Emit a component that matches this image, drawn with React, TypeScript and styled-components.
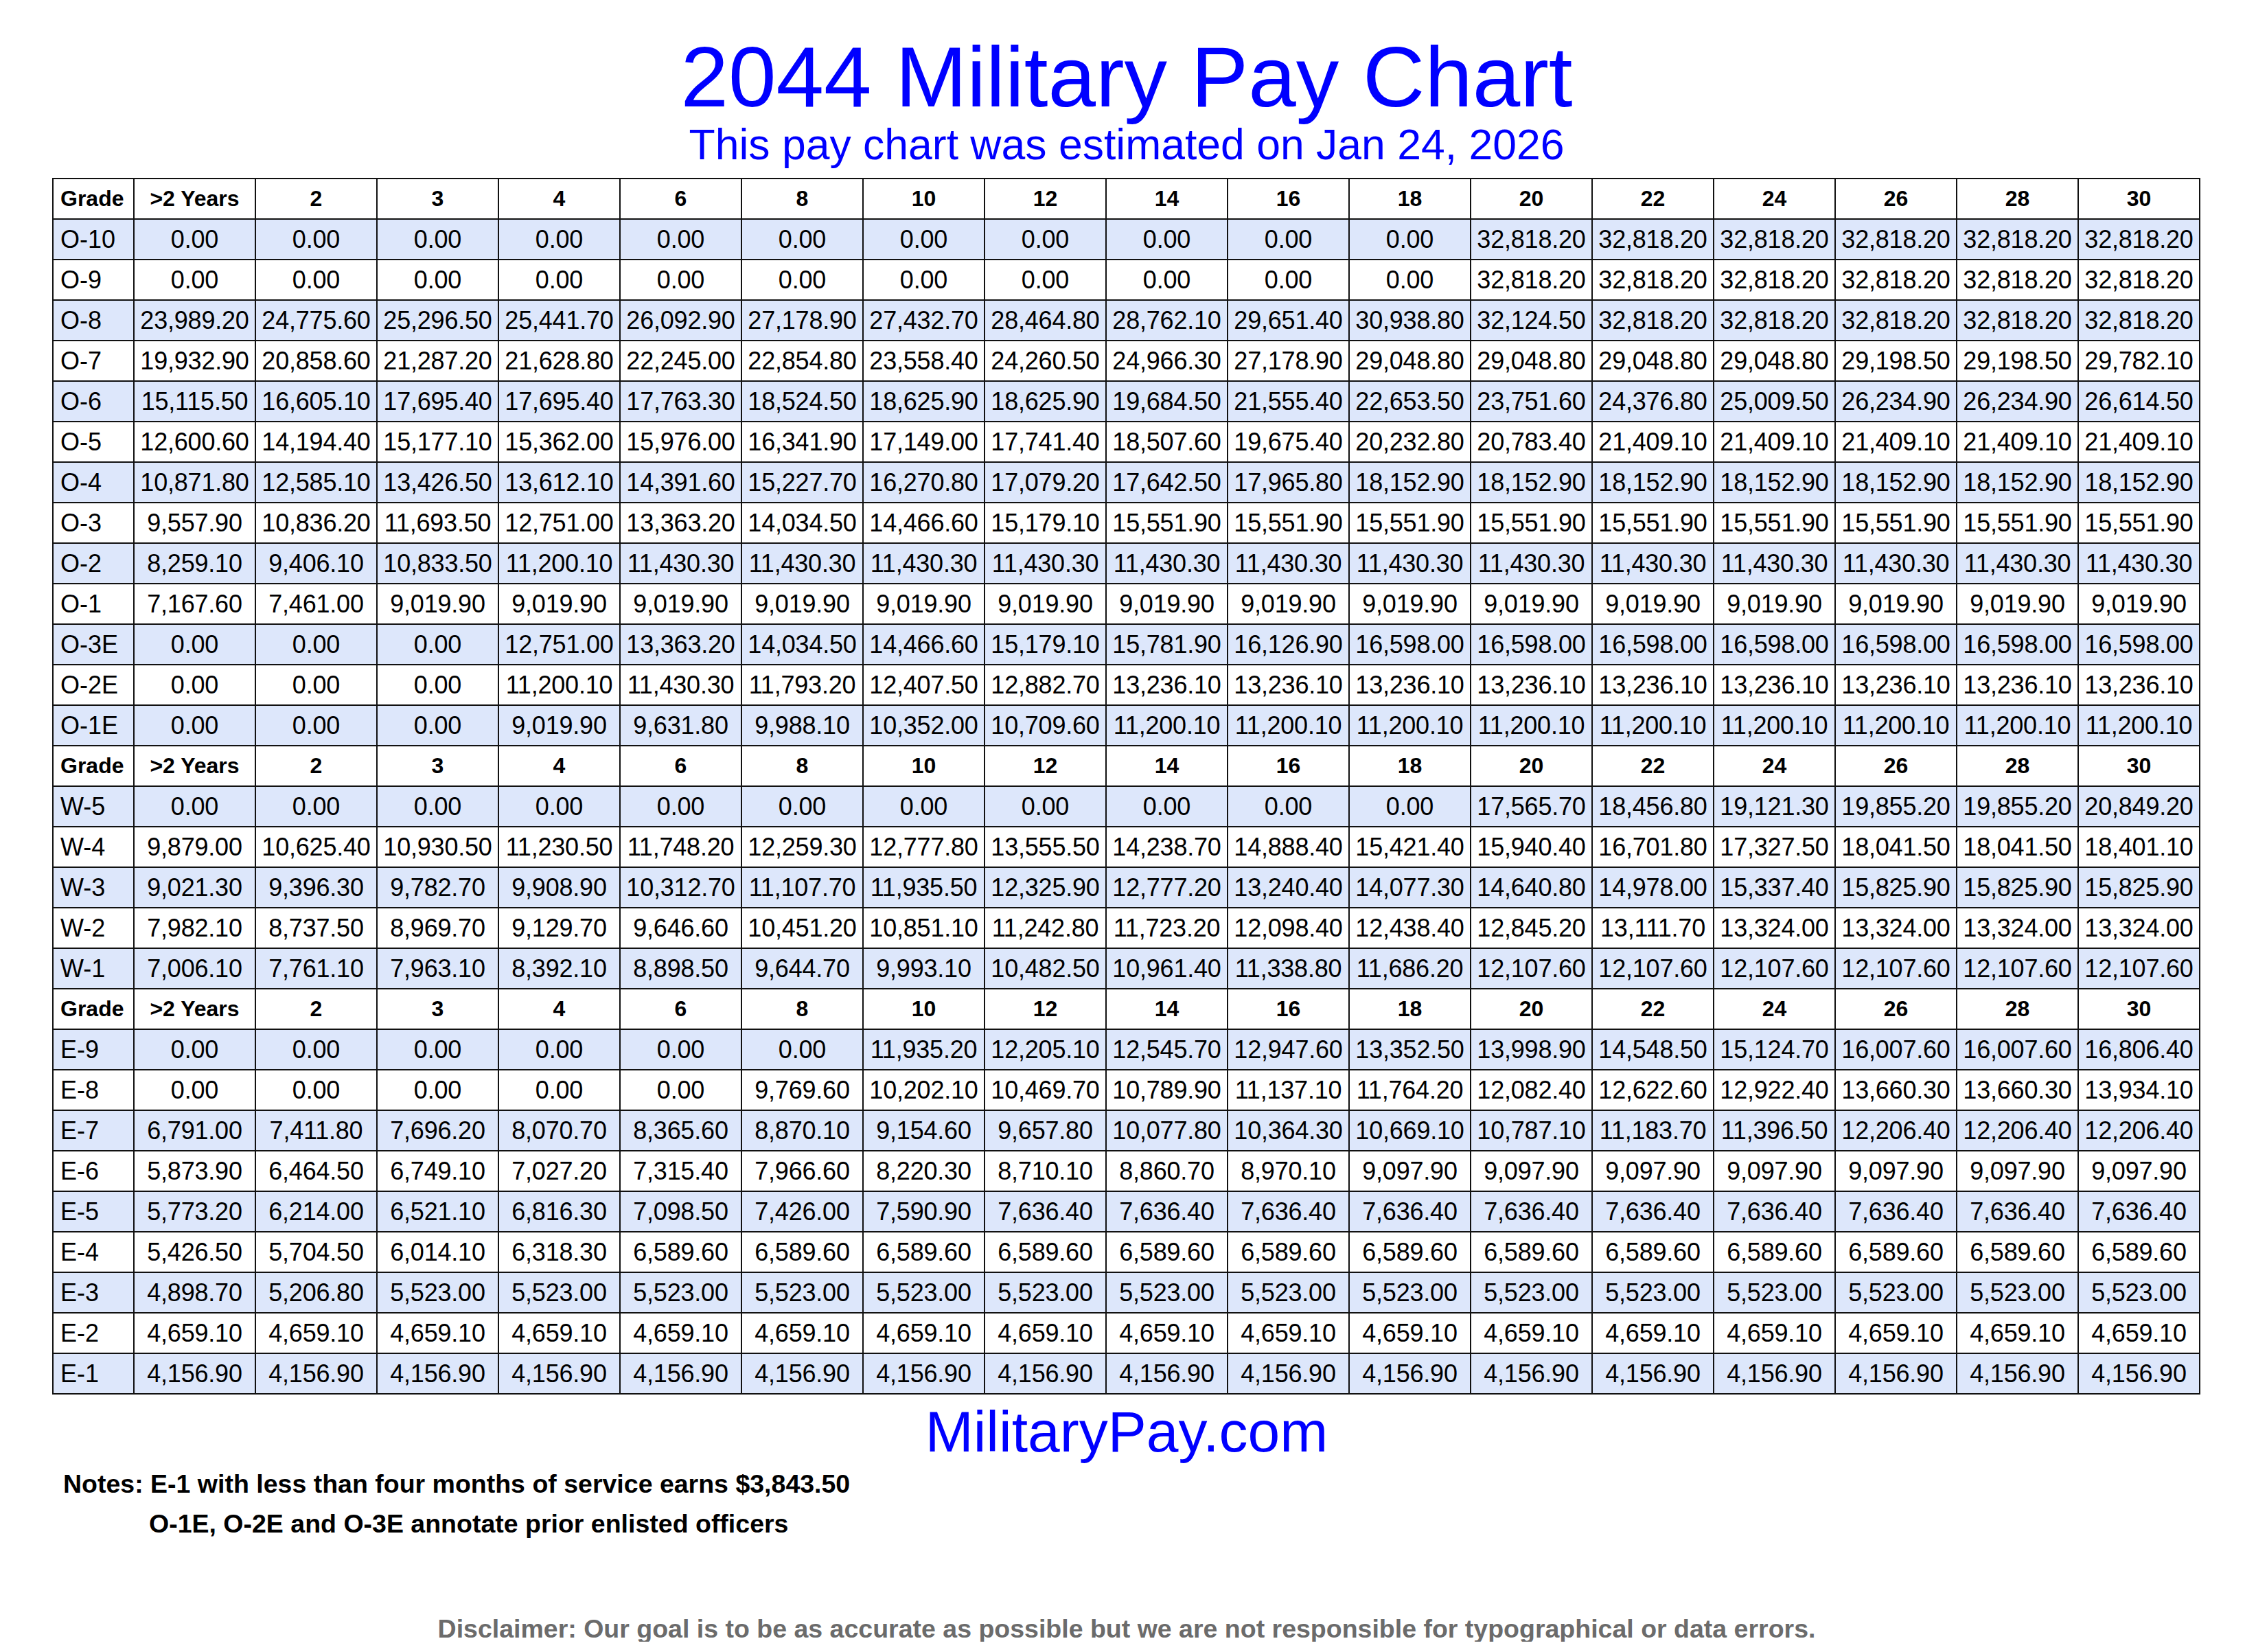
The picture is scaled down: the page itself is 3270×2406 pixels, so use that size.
import React from 'react';
import styled, { createGlobalStyle } from 'styled-components';

const GlobalStyle = createGlobalStyle`
  html, body {
    margin: 0;
    padding: 0;
    background: #fff;
  }
  body {
    font-family: 'Liberation Sans', Arial, sans-serif;
  }
`;

const HEADERS = ['>2 Years', '2', '3', '4', '6', '8', '10', '12', '14', '16', '18', '20', '22', '24', '26', '28', '30'];

const rep = (v: string, n: number) => Array(n).fill(v);

type PayRow = { grade: string; pay: string[] };

const officerRows: PayRow[] = [
  { grade: 'O-10', pay: [...rep('0.00', 11), ...rep('32,818.20', 6)] },
  { grade: 'O-9', pay: [...rep('0.00', 11), ...rep('32,818.20', 6)] },
  {
    grade: 'O-8',
    pay: ['23,989.20', '24,775.60', '25,296.50', '25,441.70', '26,092.90', '27,178.90', '27,432.70', '28,464.80', '28,762.10', '29,651.40', '30,938.80', '32,124.50', ...rep('32,818.20', 5)]
  },
  {
    grade: 'O-7',
    pay: ['19,932.90', '20,858.60', '21,287.20', '21,628.80', '22,245.00', '22,854.80', '23,558.40', '24,260.50', '24,966.30', '27,178.90', ...rep('29,048.80', 4), '29,198.50', '29,198.50', '29,782.10']
  },
  {
    grade: 'O-6',
    pay: ['15,115.50', '16,605.10', '17,695.40', '17,695.40', '17,763.30', '18,524.50', '18,625.90', '18,625.90', '19,684.50', '21,555.40', '22,653.50', '23,751.60', '24,376.80', '25,009.50', '26,234.90', '26,234.90', '26,614.50']
  },
  {
    grade: 'O-5',
    pay: ['12,600.60', '14,194.40', '15,177.10', '15,362.00', '15,976.00', '16,341.90', '17,149.00', '17,741.40', '18,507.60', '19,675.40', '20,232.80', '20,783.40', ...rep('21,409.10', 5)]
  },
  {
    grade: 'O-4',
    pay: ['10,871.80', '12,585.10', '13,426.50', '13,612.10', '14,391.60', '15,227.70', '16,270.80', '17,079.20', '17,642.50', '17,965.80', ...rep('18,152.90', 7)]
  },
  {
    grade: 'O-3',
    pay: ['9,557.90', '10,836.20', '11,693.50', '12,751.00', '13,363.20', '14,034.50', '14,466.60', '15,179.10', ...rep('15,551.90', 9)]
  },
  { grade: 'O-2', pay: ['8,259.10', '9,406.10', '10,833.50', '11,200.10', ...rep('11,430.30', 13)] },
  { grade: 'O-1', pay: ['7,167.60', '7,461.00', ...rep('9,019.90', 15)] },
  {
    grade: 'O-3E',
    pay: [...rep('0.00', 3), '12,751.00', '13,363.20', '14,034.50', '14,466.60', '15,179.10', '15,781.90', '16,126.90', ...rep('16,598.00', 7)]
  },
  {
    grade: 'O-2E',
    pay: [...rep('0.00', 3), '11,200.10', '11,430.30', '11,793.20', '12,407.50', '12,882.70', ...rep('13,236.10', 9)]
  },
  {
    grade: 'O-1E',
    pay: [...rep('0.00', 3), '9,019.90', '9,631.80', '9,988.10', '10,352.00', '10,709.60', ...rep('11,200.10', 9)]
  }
];

const warrantRows: PayRow[] = [
  { grade: 'W-5', pay: [...rep('0.00', 11), '17,565.70', '18,456.80', '19,121.30', '19,855.20', '19,855.20', '20,849.20'] },
  {
    grade: 'W-4',
    pay: ['9,879.00', '10,625.40', '10,930.50', '11,230.50', '11,748.20', '12,259.30', '12,777.80', '13,555.50', '14,238.70', '14,888.40', '15,421.40', '15,940.40', '16,701.80', '17,327.50', '18,041.50', '18,041.50', '18,401.10']
  },
  {
    grade: 'W-3',
    pay: ['9,021.30', '9,396.30', '9,782.70', '9,908.90', '10,312.70', '11,107.70', '11,935.50', '12,325.90', '12,777.20', '13,240.40', '14,077.30', '14,640.80', '14,978.00', '15,337.40', ...rep('15,825.90', 3)]
  },
  {
    grade: 'W-2',
    pay: ['7,982.10', '8,737.50', '8,969.70', '9,129.70', '9,646.60', '10,451.20', '10,851.10', '11,242.80', '11,723.20', '12,098.40', '12,438.40', '12,845.20', '13,111.70', ...rep('13,324.00', 4)]
  },
  {
    grade: 'W-1',
    pay: ['7,006.10', '7,761.10', '7,963.10', '8,392.10', '8,898.50', '9,644.70', '9,993.10', '10,482.50', '10,961.40', '11,338.80', '11,686.20', ...rep('12,107.60', 6)]
  }
];

const enlistedRows: PayRow[] = [
  {
    grade: 'E-9',
    pay: [...rep('0.00', 6), '11,935.20', '12,205.10', '12,545.70', '12,947.60', '13,352.50', '13,998.90', '14,548.50', '15,124.70', '16,007.60', '16,007.60', '16,806.40']
  },
  {
    grade: 'E-8',
    pay: [...rep('0.00', 5), '9,769.60', '10,202.10', '10,469.70', '10,789.90', '11,137.10', '11,764.20', '12,082.40', '12,622.60', '12,922.40', '13,660.30', '13,660.30', '13,934.10']
  },
  {
    grade: 'E-7',
    pay: ['6,791.00', '7,411.80', '7,696.20', '8,070.70', '8,365.60', '8,870.10', '9,154.60', '9,657.80', '10,077.80', '10,364.30', '10,669.10', '10,787.10', '11,183.70', '11,396.50', ...rep('12,206.40', 3)]
  },
  {
    grade: 'E-6',
    pay: ['5,873.90', '6,464.50', '6,749.10', '7,027.20', '7,315.40', '7,966.60', '8,220.30', '8,710.10', '8,860.70', '8,970.10', ...rep('9,097.90', 7)]
  },
  {
    grade: 'E-5',
    pay: ['5,773.20', '6,214.00', '6,521.10', '6,816.30', '7,098.50', '7,426.00', '7,590.90', ...rep('7,636.40', 10)]
  },
  { grade: 'E-4', pay: ['5,426.50', '5,704.50', '6,014.10', '6,318.30', ...rep('6,589.60', 13)] },
  { grade: 'E-3', pay: ['4,898.70', '5,206.80', ...rep('5,523.00', 15)] },
  { grade: 'E-2', pay: rep('4,659.10', 17) },
  { grade: 'E-1', pay: rep('4,156.90', 17) }
];

const Page = styled.div`
  width: 3130px;
  margin-left: 76px;
  padding-top: 51px;
  color: #000;
`;

const Title = styled.h1`
  margin: 0;
  text-align: center;
  font-family: 'Liberation Sans', Arial, sans-serif;
  font-weight: 400;
  font-size: 125px;
  line-height: 122px;
  color: #0000ff;
`;

const Subtitle = styled.h2`
  margin: 6px 0 0;
  text-align: center;
  font-family: 'Liberation Sans', Arial, sans-serif;
  font-weight: 400;
  font-size: 62.5px;
  line-height: 62px;
  color: #0000ff;
`;

const PayTable = styled.table`
  margin-top: 18px;
  width: 3129px;
  table-layout: fixed;
  border-collapse: collapse;
  border: 2px solid #111;
  font-family: 'Liberation Sans', Arial, sans-serif;
`;

const Row = styled.tr<{ $shaded?: boolean }>`
  height: 59px;
  background: ${(p) => (p.$shaded ? '#dde7fb' : '#fff')};
`;

const HeadCell = styled.th`
  border: 2px solid #111;
  padding: 0;
  font-size: 32px;
  font-weight: 700;
  text-align: center;
  white-space: nowrap;

  &:first-child {
    text-align: left;
    padding-left: 10px;
  }
`;

const GradeCell = styled.td`
  border: 2px solid #111;
  padding: 0 0 0 10px;
  font-size: 36px;
  text-align: left;
  white-space: nowrap;
`;

const PayCell = styled.td`
  border: 2px solid #111;
  padding: 0;
  font-size: 36px;
  text-align: center;
  white-space: nowrap;
  letter-spacing: -0.2px;
`;

const SiteName = styled.div`
  margin-top: 12px;
  text-align: center;
  font-size: 84px;
  line-height: 84px;
  color: #0000ff;
`;

const Notes = styled.div`
  margin-top: 5px;
  padding-left: 16px;
  font-size: 37.5px;
  font-weight: 700;
  line-height: 58px;
`;

const NoteLine = styled.div<{ $indent?: boolean }>`
  padding-left: ${(p) => (p.$indent ? '125px' : '0')};
`;

const Disclaimer = styled.div`
  margin-top: 106px;
  text-align: center;
  font-size: 37.5px;
  line-height: 37px;
  font-weight: 700;
  color: #6b6b6b;
`;

const HeaderRow = () => (
  <Row>
    <HeadCell>Grade</HeadCell>
    {HEADERS.map((h) => (
      <HeadCell key={h}>{h}</HeadCell>
    ))}
  </Row>
);

const PayRows = ({ rows }: { rows: PayRow[] }) => (
  <>
    {rows.map((r, i) => (
      <Row key={r.grade} $shaded={i % 2 === 0}>
        <GradeCell>{r.grade}</GradeCell>
        {r.pay.map((v, j) => (
          <PayCell key={j}>{v}</PayCell>
        ))}
      </Row>
    ))}
  </>
);

export default function App() {
  return (
    <>
      <GlobalStyle />
      <Page>
        <Title>2044 Military Pay Chart</Title>
        <Subtitle>This pay chart was estimated on Jan 24, 2026</Subtitle>
        <PayTable>
          <colgroup>
            <col style={{ width: 118 }} />
            {HEADERS.map((h) => (
              <col key={h} style={{ width: 177 }} />
            ))}
          </colgroup>
          <tbody>
            <HeaderRow />
            <PayRows rows={officerRows} />
            <HeaderRow />
            <PayRows rows={warrantRows} />
            <HeaderRow />
            <PayRows rows={enlistedRows} />
          </tbody>
        </PayTable>
        <SiteName>MilitaryPay.com</SiteName>
        <Notes>
          <NoteLine>Notes: E-1 with less than four months of service earns $3,843.50</NoteLine>
          <NoteLine $indent>O-1E, O-2E and O-3E annotate prior enlisted officers</NoteLine>
        </Notes>
        <Disclaimer>
          Disclaimer: Our goal is to be as accurate as possible but we are not responsible for typographical or data errors.
        </Disclaimer>
      </Page>
    </>
  );
}
